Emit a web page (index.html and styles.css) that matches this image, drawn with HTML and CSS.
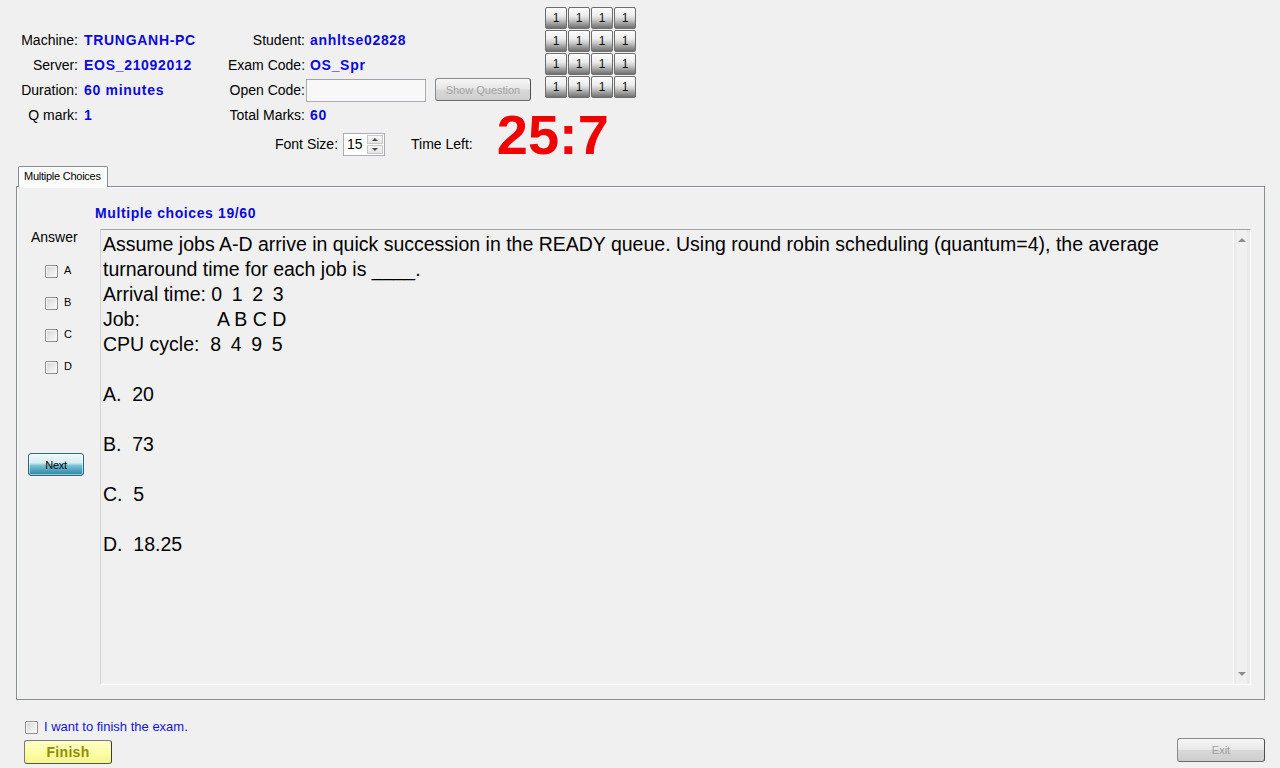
FILE: index.html
```html
<!DOCTYPE html>
<html>
<head>
<meta charset="utf-8">
<title>EOS Exam</title>
<link rel="stylesheet" href="styles.css">
</head>
<body>
<div class="form">
  <header class="top">
    <div class="top-row">
      <div class="info">
        <span class="lbl">Machine:</span><span class="val">TRUNGANH-PC</span>
        <span class="lbl">Student:</span><span class="val v2">anhltse02828</span>
        <span class="lbl">Server:</span><span class="val">EOS_21092012</span>
        <span class="lbl">Exam Code:</span><span class="val v2">OS_Spr</span>
        <span class="lbl">Duration:</span><span class="val">60 minutes</span>
        <span class="lbl">Open Code:</span>
        <span class="code-cell"><span class="code-input"></span><span class="btn btn-show">Show Question</span></span>
        <span class="lbl">Q mark:</span><span class="val">1</span>
        <span class="lbl">Total Marks:</span><span class="val v2">60</span>
      </div>
      <div class="qgrid">
        <span class="qbtn">1</span><span class="qbtn">1</span><span class="qbtn">1</span><span class="qbtn">1</span>
        <span class="qbtn">1</span><span class="qbtn">1</span><span class="qbtn">1</span><span class="qbtn">1</span>
        <span class="qbtn">1</span><span class="qbtn">1</span><span class="qbtn">1</span><span class="qbtn">1</span>
        <span class="qbtn">1</span><span class="qbtn">1</span><span class="qbtn">1</span><span class="qbtn">1</span>
      </div>
    </div>
    <div class="font-row">
      <span class="lbl-plain">Font Size:</span>
      <span class="spinner"><span class="spin-val">15</span><span class="spin-btns"><span class="spin-up"></span><span class="spin-down"></span></span></span>
      <span class="lbl-plain time-lbl">Time Left:</span>
      <span class="timer">25:7</span>
    </div>
  </header>

  <section class="tabs">
    <div class="tab-strip"><span class="tab active">Multiple Choices</span></div>
    <div class="tab-panel">
      <div class="q-title">Multiple choices 19/60</div>
      <div class="q-body">
        <div class="answer-col">
          <div class="answer-lbl">Answer</div>
          <div class="choices">
            <label class="choice"><span class="cb"></span><span class="cb-text">A</span></label>
            <label class="choice"><span class="cb"></span><span class="cb-text">B</span></label>
            <label class="choice"><span class="cb"></span><span class="cb-text">C</span></label>
            <label class="choice"><span class="cb"></span><span class="cb-text">D</span></label>
          </div>
          <div class="btn-next">Next</div>
        </div>
        <div class="qbox">
          <div class="qtext"><div class="ln">Assume jobs A-D arrive in quick succession in the READY queue. Using round robin scheduling (quantum=4), the average</div><div class="ln">turnaround time for each job is ____.</div><div class="ln">Arrival time: <span class="nums">0  1  2  3</span></div><div class="ln"><span class="job">Job:</span>A B C D</div><div class="ln">CPU cycle:  <span class="nums">8  4  9  5</span></div><div class="ln"> </div><div class="ln">A.  20</div><div class="ln"> </div><div class="ln">B.  73</div><div class="ln"> </div><div class="ln">C.  5</div><div class="ln"> </div><div class="ln">D.  18.25</div></div>
          <div class="vscroll"><span class="arr-up"></span><span class="arr-down"></span></div>
        </div>
      </div>
    </div>
  </section>

  <footer class="bottom">
    <div class="finish-col">
      <label class="finish-check"><span class="cb"></span><span class="finish-text">I want to finish the exam.</span></label>
      <div class="btn btn-finish">Finish</div>
    </div>
    <div class="btn btn-exit">Exit</div>
  </footer>
</div>
</body>
</html>
```

FILE: styles.css
```css
* { box-sizing: border-box; }
html, body { margin: 0; padding: 0; }
body {
  background: #f0f0f0;
  font-family: "Liberation Sans", Arial, sans-serif;
  color: #000;
  width: 1280px;
  height: 768px;
  overflow: hidden;
}
.form { width: 1280px; height: 768px; }

/* ---------- header ---------- */
.top { height: 155px; }
.top-row { display: flex; align-items: flex-start; height: 128px; }
.info {
  display: grid;
  grid-template-columns: 78px 150px 77px 226px;
  grid-auto-rows: 25px;
  align-items: center;
  margin-top: 27px;
  font-size: 14px;
}
.lbl { text-align: right; white-space: nowrap; }
.val {
  padding-left: 6px;
  font-weight: bold;
  color: #0a0adc;
  letter-spacing: 0.7px;
  white-space: nowrap;
}
.val.v2 { padding-left: 5px; }
.code-cell { display: flex; align-items: center; padding-left: 1px; }
.code-input {
  width: 121px; height: 23px;
  margin-top: 1px;
  background: #f8f8f8;
  border: 1px solid #abadb3;
  border-top-color: #a0a3a8;
}
.btn {
  display: flex; align-items: center; justify-content: center;
  border: 1px solid #8a8a8a;
  border-right-color: #505050;
  border-bottom-color: #6a6a6a;
  border-radius: 3px;
  font-size: 11px;
}
.btn-show {
  margin-left: 9px;
  width: 97px; height: 23px;
  background: linear-gradient(#f6f6f6 0%, #e6e6e6 48%, #d8d8d8 52%, #cfcfcf 100%);
  color: #a3a3a3;
}
.qgrid {
  display: grid;
  grid-template-columns: repeat(4, 22px);
  grid-auto-rows: 22px;
  gap: 1px 1px;
  margin-left: 14px;
  margin-top: 7px;
}
.qbtn {
  display: flex; align-items: center; justify-content: center;
  border: 1px solid #6e6e6e;
  border-radius: 2px;
  background: linear-gradient(#fdfdfd 0%, #ececec 40%, #cdcdcd 58%, #9a9a9a 80%, #707070 100%);
  font-size: 12px;
  color: #111;
}

.font-row {
  display: flex; align-items: center;
  height: 22px;
  margin-top: 5px;
  padding-left: 275px;
  font-size: 14px;
}
.lbl-plain { white-space: nowrap; margin-top: -1px; }
.spinner {
  display: flex;
  margin-left: 5px;
  width: 42px; height: 23px;
  background: #fff;
  border: 1px solid #abadb3;
}
.spin-val { flex: 1; padding-left: 3px; line-height: 21px; font-size: 14px; }
.spin-btns { width: 17px; display: flex; flex-direction: column; padding: 1px 1px 1px 0; gap: 1px; }
.spin-up, .spin-down {
  flex: 1;
  border: 1px solid #c8c8c8;
  background: linear-gradient(#f6f6f6, #e4e4e4);
  position: relative;
}
.spin-up::after, .spin-down::after {
  content: ""; position: absolute; left: 4px; top: 2px;
  border-left: 3px solid transparent; border-right: 3px solid transparent;
}
.spin-up::after { border-bottom: 3px solid #4a4a4a; }
.spin-down::after { border-top: 3px solid #4a4a4a; }
.time-lbl { margin-left: 26px; }
.timer {
  align-self: flex-start;
  margin-top: -26px;
  margin-left: 24px;
  font-size: 56px;
  line-height: 56px;
  font-weight: bold;
  color: #f20000;
  white-space: nowrap;
}

/* ---------- tabs ---------- */
.tabs { margin-top: 11px; }
.tab-strip { display: flex; padding-left: 18px; height: 20px; position: relative; z-index: 1; }
.tab {
  display: block;
  width: 90px; height: 21px;
  padding-left: 5px;
  border: 1px solid #898c95;
  border-bottom: none;
  border-radius: 2px 2px 0 0;
  background: #fbfbfb;
  font-size: 11px;
  letter-spacing: -0.25px;
  line-height: 19px;
  white-space: nowrap;
}
.tab-panel {
  margin-left: 16px;
  width: 1249px; height: 514px;
  border: 1px solid #898c95;
  background: #f0f0f0;
  box-shadow: inset 1px 1px 0 #fafafa;
  padding-top: 18px;
}
.q-title {
  padding-left: 78px;
  font-size: 14px;
  line-height: 16px;
  font-weight: bold;
  color: #0a0adc;
  letter-spacing: 0.6px;
}
.q-body { display: flex; margin-top: 8px; }
.answer-col { width: 83px; }
.answer-lbl { padding-left: 14px; font-size: 14px; line-height: 16px; }
.choices { margin-top: 10px; }
.choice { display: flex; align-items: center; height: 32px; padding-left: 28px; }
.cb {
  display: inline-block;
  width: 13px; height: 13px;
  border: 1px solid #8e8f8f;
  border-radius: 1px;
  background: linear-gradient(135deg, #d2d4d6 0%, #ececec 60%, #fafafa 100%);
  box-shadow: inset 0 0 0 1px #f6f6f6;
  flex: none;
}
.cb-text { margin-left: 6px; font-size: 11px; margin-top: -2px; }
.btn-next {
  margin-top: 70px; margin-left: 11px;
  width: 56px; height: 23px;
  display: flex; align-items: center; justify-content: center;
  border: 1px solid #2a6a86;
  border-radius: 3px;
  background: linear-gradient(#eef8fb 0%, #d6edf4 42%, #7cc0d2 55%, #4aa0ba 80%, #2f86a0 100%);
  box-shadow: inset 0 0 0 1px rgba(255,255,255,0.5);
  font-size: 11px;
  letter-spacing: -0.3px;
}
.qbox {
  display: flex;
  width: 1151px; height: 456px;
  border: 1px solid;
  border-color: #a3a3a3 #ffffff #ffffff #d4d4d4;
  background: #f0f0f0;
}
.qtext {
  flex: 1;
  padding: 2px 0 0 2px;
  font-size: 19.5px;
  line-height: 25px;
  white-space: pre;
  overflow: hidden;
}
.ln { height: 25px; }
.nums { word-spacing: -0.6px; }
.job { display: inline-block; width: 114px; }
.vscroll {
  width: 17px;
  position: relative;
  border-left: 1px solid #ffffff;
  box-shadow: inset 2px 0 0 #e9e9e9, inset -3px 0 0 #e9e9e9;
}
.arr-up, .arr-down {
  position: absolute; left: 4px;
  border-left: 4px solid transparent; border-right: 4px solid transparent;
}
.arr-up { top: 8px; border-bottom: 4px solid #8c8c8c; }
.arr-down { bottom: 8px; border-top: 4px solid #8c8c8c; }

/* ---------- footer ---------- */
.bottom {
  display: flex;
  justify-content: space-between;
  height: 68px;
  padding: 0 15px 0 24px;
}
.finish-col { display: flex; flex-direction: column; }
.finish-check { display: flex; align-items: center; height: 14px; margin-top: 20px; padding-left: 1px; }
.finish-text { margin-left: 6px; font-size: 13px; color: #1414d8; white-space: nowrap; margin-top: -1px; }
.btn-finish {
  margin-top: 6px;
  width: 88px; height: 24px;
  border-color: #7a7a7a; border-right-color: #3c3c3c; border-bottom-color: #555;
  background: linear-gradient(#ffffc4 0%, #fdfda8 50%, #f6f68e 100%);
  color: #8e8e00;
  font-size: 14px;
  font-weight: bold;
  letter-spacing: 0.3px;
}
.btn-exit {
  align-self: flex-end;
  margin-bottom: 6px;
  width: 88px; height: 24px;
  background: linear-gradient(#f6f6f6 0%, #e8e8e8 48%, #d8d8d8 52%, #cdcdcd 100%);
  color: #a0a0a0;
}
```
